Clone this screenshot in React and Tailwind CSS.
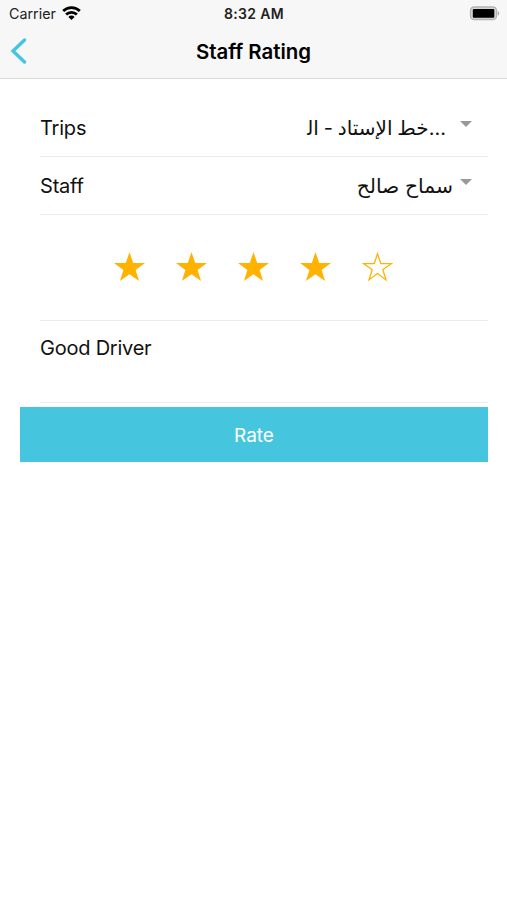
import React, { useState } from "react";

const STAR_POINTS =
  "15.5,0 19.2,11.1 31,11.1 21.6,18 25.1,29 15.5,22.3 5.9,29 9.4,18 0,11.1 11.8,11.1";

// the joiner keeps the last letter in its connected form before the dots
const TRIP_NAME = "خط الإستاد - ال\u200d...";
const STAFF_NAME = "سماح صالح";

const Star = ({ filled }) => (
  <svg className="h-[30px] w-[31px]" viewBox="0 0 31 30">
    {filled ? (
      <polygon points={STAR_POINTS} fill="#ffb300" />
    ) : (
      <polygon
        points="15.5,1.8 18.8,11.7 29.3,11.7 20.8,17.8 24,27.9 15.5,21.6 7,27.9 10.2,17.8 1.7,11.7 12.2,11.7"
        fill="none"
        stroke="#ffb300"
        strokeWidth="1.3"
      />
    )}
  </svg>
);

const StatusBar = () => (
  <div className="grid h-[26px] grid-cols-3 items-center pl-[9px] pr-[7px] text-[14px] text-[#222]">
    <div className="flex items-center gap-[6px] pt-[2px]">
      <span className="text-[14.3px] leading-[18px]">Carrier</span>
      <svg className="mb-[2px] h-[14px] w-[19px]" viewBox="0 0 19 14">
        <g fill="none" stroke="#000" strokeWidth="2.8">
          <path d="M1.2 5.1a11.8 11.8 0 0 1 16.6 0" />
          <path d="M4.1 8.6a7.7 7.7 0 0 1 10.8 0" />
        </g>
        <path d="M9.5 14 6.4 10.9a4.4 4.4 0 0 1 6.2 0z" fill="#000" />
      </svg>
    </div>
    <span className="pr-[1px] pt-[2px] text-center text-[14px] font-semibold leading-[18px] tracking-[0.3px]">
      8:32 AM
    </span>
    <svg className="h-[15px] w-[31px] justify-self-end" viewBox="0 0 31 15">
      <rect x="1.5" y="1" width="26" height="12.5" rx="3.6" fill="#d6d6d6" stroke="#b4b4b4" strokeWidth="1.3" />
      <rect x="3.8" y="3" width="21.5" height="8.7" rx="1" fill="#000" />
      <path d="M28.6 5c2.2 1 2.2 3.6 0 4.6z" fill="#a8a8a8" />
    </svg>
  </div>
);

const SelectRow = ({ label, children }) => (
  <div className="flex h-[58px] items-center justify-between border-b border-[#ebebeb] pr-[16px]">
    <span className="text-[20px] leading-6 tracking-[-0.2px]">{label}</span>
    <div className="flex items-center">
      {children}
      <svg className="mb-[8px] h-[6px] w-[12px]" viewBox="0 0 12 6">
        <path d="M0 0h12L6 6z" fill="#999" />
      </svg>
    </div>
  </div>
);

const App = () => {
  const [rating, setRating] = useState(4);

  return (
    <div className="h-[900px] w-[507px] overflow-hidden bg-white font-['Inter','DejaVu_Sans',sans-serif] text-[#111]">
      <header className="h-[79px] border-b border-[#d9d9d9] bg-[#f7f7f7]">
        <StatusBar />
        <div className="grid h-[52px] grid-cols-[40px_1fr_40px] items-center">
          <button className="pb-[2px] pl-[10px]">
            <svg className="h-[26px] w-[17px]" viewBox="0 0 17 26">
              <path
                d="M14.5 2 3 13l11.5 11"
                fill="none"
                stroke="#45c6de"
                strokeWidth="3.4"
                strokeLinecap="round"
              />
            </svg>
          </button>
          <h1 className="text-center text-[20.4px] font-semibold leading-6 text-black">Staff Rating</h1>
        </div>
      </header>

      <main className="pl-[20px] pr-[19px] pt-[20px]">
        <div className="pl-[20px]">
          <SelectRow label="Trips">
            <span dir="ltr" className="mr-[14px] whitespace-nowrap text-[20px] leading-6 [word-spacing:-0.8px]">
              {TRIP_NAME}
            </span>
          </SelectRow>
          <SelectRow label="Staff">
            <span dir="ltr" className="mr-[7px] whitespace-nowrap text-[20.3px] leading-6">
              {STAFF_NAME}
            </span>
          </SelectRow>

          <div className="flex h-[106px] justify-center gap-[30.8px] border-b border-[#ebebeb] pr-[21px] pt-[37px]">
            {[1, 2, 3, 4, 5].map((n) => (
              <button key={n} className="h-[30px]" onClick={() => setRating(n)}>
                <Star filled={n <= rating} />
              </button>
            ))}
          </div>

          <div className="h-[82px] border-b border-[#ebebeb] pt-[15px] text-[20px] leading-6 tracking-[-0.23px]">
            Good Driver
          </div>
        </div>

        <button className="mt-[4px] h-[55px] w-full bg-[#45c6de] pt-[3px] text-[19px] text-white">Rate</button>
      </main>
    </div>
  );
};

export default App;
